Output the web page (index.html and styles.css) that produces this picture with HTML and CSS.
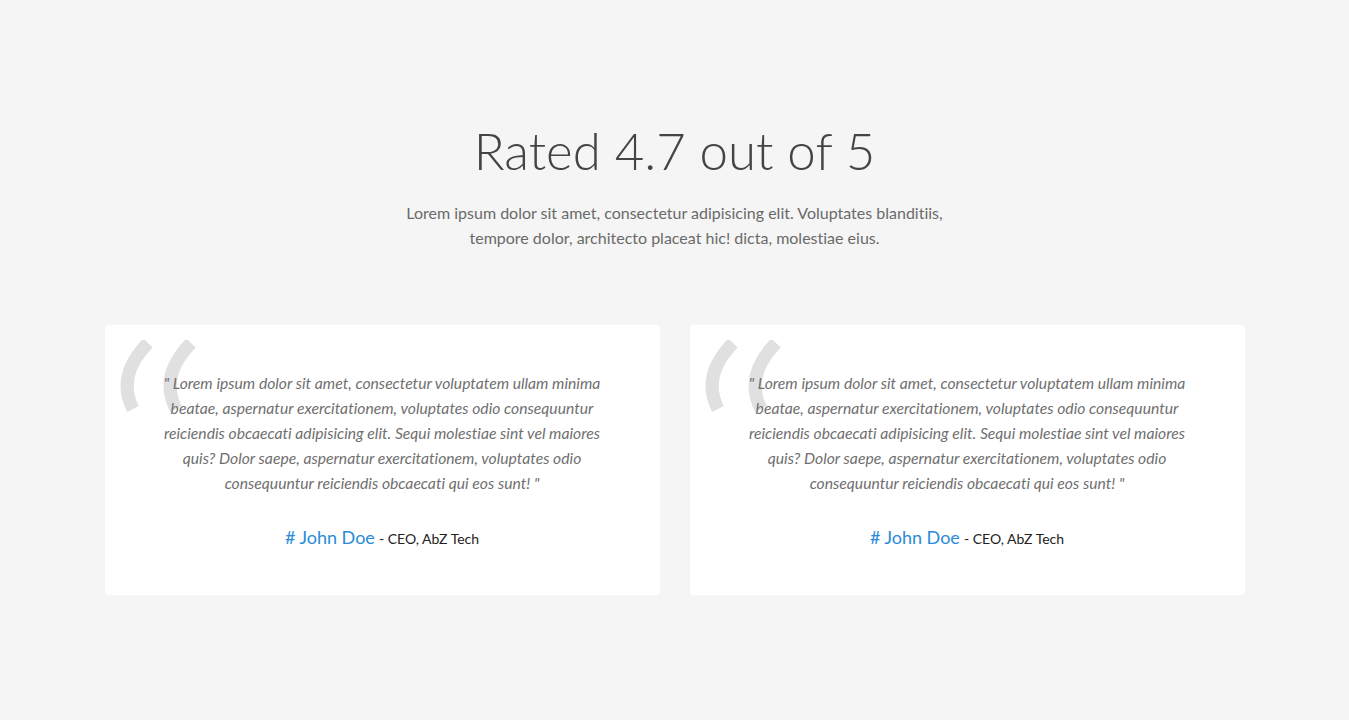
FILE: index.html
```html
<!DOCTYPE html>
<html lang="en">
<head>
<meta charset="utf-8">
<title>Testimonials</title>
<link rel="stylesheet" href="styles.css">
</head>
<body>
<section class="testimonials">
  <header class="intro">
    <h1 class="title">Rated 4.7 out of 5</h1>
    <p class="lead">Lorem ipsum dolor sit amet, consectetur adipisicing elit. Voluptates blanditiis, tempore dolor, architecto placeat hic! dicta, molestiae eius.</p>
  </header>
  <div class="cards">
    <article class="card">
      <svg class="quote-mark" width="90" height="80" viewBox="0 0 90 80" aria-hidden="true">
        <path d="M28 3 Q-4 36 13 69" />
        <path d="M71 3 Q39 36 56 69" />
      </svg>
      <p class="quote">" Lorem ipsum dolor sit amet, consectetur voluptatem ullam minima beatae, aspernatur exercitationem, voluptates odio consequuntur reiciendis obcaecati adipisicing elit. Sequi molestiae sint vel maiores quis? Dolor saepe, aspernatur exercitationem, voluptates odio consequuntur reiciendis obcaecati qui eos sunt! "</p>
      <p class="author"><span class="name"># John Doe</span> <span class="role">- CEO, AbZ Tech</span></p>
    </article>
    <article class="card">
      <svg class="quote-mark" width="90" height="80" viewBox="0 0 90 80" aria-hidden="true">
        <path d="M28 3 Q-4 36 13 69" />
        <path d="M71 3 Q39 36 56 69" />
      </svg>
      <p class="quote">" Lorem ipsum dolor sit amet, consectetur voluptatem ullam minima beatae, aspernatur exercitationem, voluptates odio consequuntur reiciendis obcaecati adipisicing elit. Sequi molestiae sint vel maiores quis? Dolor saepe, aspernatur exercitationem, voluptates odio consequuntur reiciendis obcaecati qui eos sunt! "</p>
      <p class="author"><span class="name"># John Doe</span> <span class="role">- CEO, AbZ Tech</span></p>
    </article>
  </div>
</section>
</body>
</html>
```

FILE: styles.css
```css
html, body {
  margin: 0;
  padding: 0;
}

body {
  background: #f5f5f5;
  font-family: "Lato", "Liberation Sans", sans-serif;
  font-variant-ligatures: none;
  color: #666;
  min-height: 720px;
}

.testimonials {
  width: 1140px;
  margin: 0 auto;
  padding-top: 122px;
}

.intro {
  text-align: center;
}

.title {
  margin: 0;
  font-weight: 300;
  font-size: 51px;
  line-height: 57px;
  color: #444;
}

.lead {
  margin: 21px auto 0;
  max-width: 560px;
  font-size: 16px;
  line-height: 25px;
  color: #6a6a6a;
}

.cards {
  display: grid;
  grid-template-columns: 1fr 1fr;
  gap: 30px;
  margin-top: 75px;
}

.card {
  position: relative;
  background: #fff;
  border-radius: 4px;
  padding: 46px 50px 43px;
  text-align: center;
}

.quote-mark {
  position: absolute;
  left: 15px;
  top: 15px;
  fill: none;
  stroke: #e0e0e0;
  stroke-width: 13;
}

.quote {
  position: relative;
  margin: 0;
  font-style: italic;
  font-size: 15.7px;
  line-height: 25px;
  color: #6f6f6f;
}

.author {
  margin: 28px 0 0;
  line-height: 26px;
}

.name {
  font-size: 18px;
  color: #2a8bd8;
}

.role {
  font-size: 14px;
  color: #222;
}
```
